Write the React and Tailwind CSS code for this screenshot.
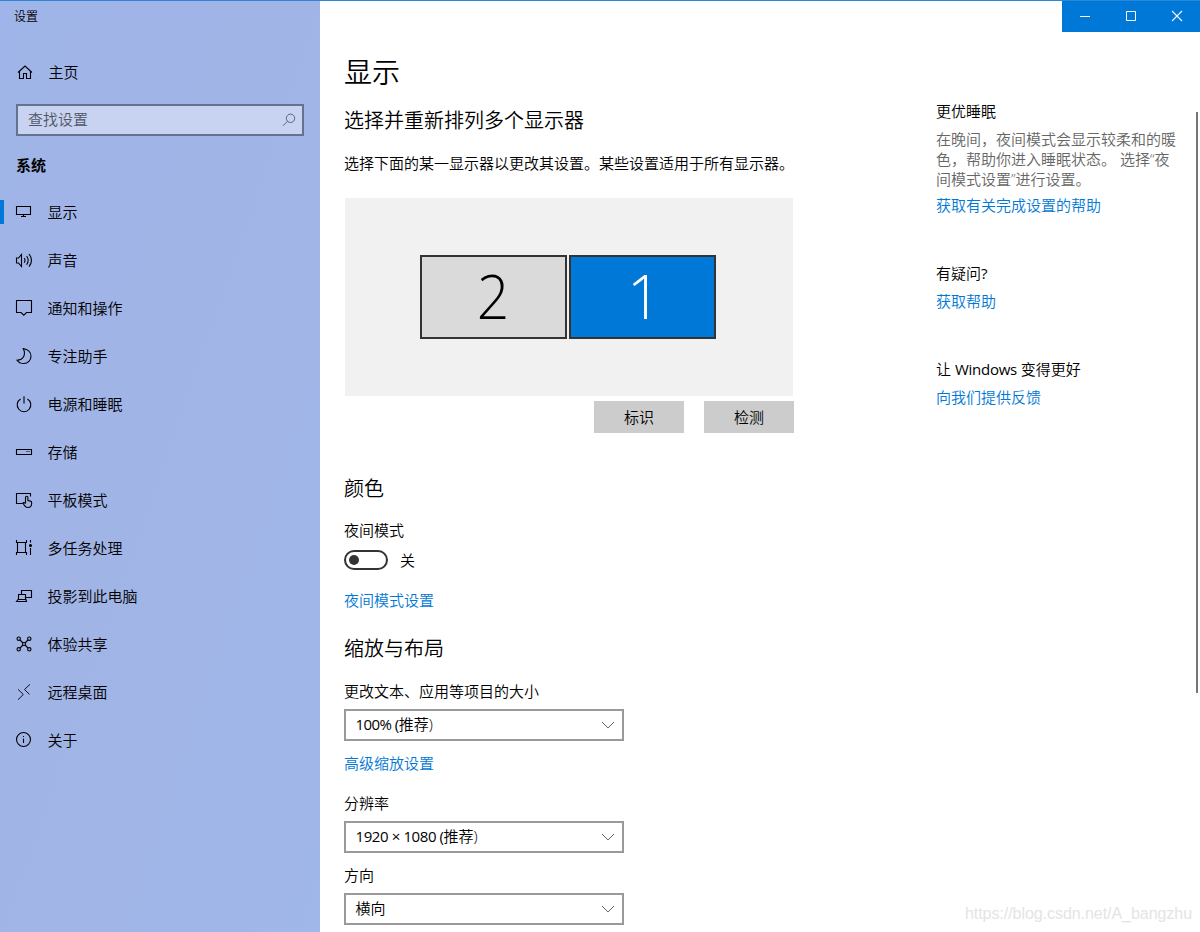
import React from 'react';

const Icon = ({ children }) => (
  <svg className="w-[18px] h-[18px] shrink-0" viewBox="0 0 18 18" fill="none" stroke="#000" strokeWidth="1.1">
    {children}
  </svg>
);

const navItems = [
  {
    label: '显示',
    active: true,
    icon: <path d="M1.5 3.5h14v8h-14zM8.5 12v1.5M6 13.5h5" />,
  },
  {
    label: '声音',
    icon: (
      <path d="M1.5 7h2l3-3.5v12L3.5 12h-2zM9.2 7q1.6 2.4 0 4.8M11.6 5q3.2 4.3 0 8.8M14 3q5 6.2 0 12.6" />
    ),
  },
  { label: '通知和操作', icon: <path d="M1.5 1.5h15v12h-5l-2.7 2.7-2.7-2.7H1.5z" /> },
  {
    label: '专注助手',
    icon: <path d="M8.2 1.6C13 2.2 16 5.4 16 9.2C16 13.3 12.8 16.5 8.8 16.5C6 16.5 3.5 15.3 2 13.2C8.5 13.2 11.2 7.5 8.2 1.6z" />,
  },
  { label: '电源和睡眠', icon: <path d="M5.6 4A6.8 6.8 0 1 0 12.4 4M9 1.2V8.5" /> },
  {
    label: '存储',
    icon: (
      <>
        <path d="M1.5 6.5h15v5h-15z" />
        <path d="M11.500 8.500h1M13.500 8.500h1" />
      </>
    ),
  },
  {
    label: '平板模式',
    icon: (
      <path d="M15.5 5.500V2.5h-14v10h6M10.5 12.500V6.500a1.200 1.200 0 0 1 2.400 0V9.500l2.600.6q1.200.4 1.200 1.800c0 3-1.400 4.600-3.700 4.600c-2.500 0-3.500-1.500-4.900-4.300q0-1.600 2.400.3" />
    ),
  },
  {
    label: '多任务处理',
    icon: (
      <>
        <path d="M1.5 1v2.5h10V1M2.5 3.5v10M10.5 3.5v10M1.5 16v-2.5h10V16M15.5 1v2.5M15.5 9v7" />
        <circle cx="15.5" cy="6.5" r="1" fill="#000" />
      </>
    ),
  },
  {
    label: '投影到此电脑',
    icon: <path d="M6.5 7V3.5h10v7h-6M3.5 12.5v-5h7v5M1.5 14.5l1.5-2h8l.5 2z" />,
  },
  {
    label: '体验共享',
    icon: (
      <>
        <circle cx="3.7" cy="3.7" r="1.7" />
        <circle cx="14.3" cy="3.7" r="1.7" />
        <circle cx="3.7" cy="14.3" r="1.7" />
        <circle cx="14.3" cy="14.3" r="1.7" />
        <circle cx="9" cy="9" r="1.5" />
        <path d="M5 5l3 3M13 5l-3 3M5 13l3-3M13 13l-3-3" />
      </>
    ),
  },
  { label: '远程桌面', icon: <path strokeWidth="0.9" d="M3 6.3l5.3 5.2L3 16.7M15 1.3L9.5 6.5l5 4.9" /> },
  {
    label: '关于',
    icon: (
      <>
        <circle cx="8.5" cy="8.5" r="7" />
        <path d="M8.5 5v1M8.5 7.5V12" />
      </>
    ),
  },
];

const Sidebar = () => (
  <aside className="w-[320px] shrink-0 flex flex-col bg-linear-to-br from-[#9fb4e8] via-[#a1b4e6] to-[#a0b7e9]">
    <div className="h-8 pl-[14px] pt-[2px] flex items-center text-xs">设置</div>
    <div className="mt-4 h-12 pl-[15px] flex items-center gap-[15.5px]">
      <Icon>
        <path d="M3 9.5l7-6.5 7 6.5M4.5 8.5v7h4v-5h3v5h4v-7" />
      </Icon>
      <span>主页</span>
    </div>
    <div className="mt-2 mx-4 h-8 pl-[10px] pr-[5px] flex items-center justify-between border-2 border-[#62728f] bg-[#c7d3f1] text-[#505664]">
      <span className="relative -top-px">查找设置</span>
      <svg className="w-[16px] h-[16px]" viewBox="0 0 16 16" fill="none" stroke="#5a6475">
        <circle cx="9.5" cy="6.3" r="4.2" />
        <path d="M6.5 9.3L2 13.8" />
      </svg>
    </div>
    <div className="mt-[19px] mb-[13px] h-5 pl-4 leading-5 font-bold">系统</div>
    <nav>
      {navItems.map((item) => (
        <div key={item.label} className="h-12 flex items-center">
          <div className={item.active ? 'w-1 h-6 bg-[#0078d7]' : 'w-1 h-6'} />
          <div className="pl-[11px] flex items-center gap-[14.5px]">
            <Icon>{item.icon}</Icon>
            <span>{item.label}</span>
          </div>
        </div>
      ))}
    </nav>
  </aside>
);

const WindowControls = () => (
  <div className="h-8 flex justify-end">
    <div className="w-[138px] h-8 grid grid-cols-3 bg-[#0078d7]">
      <svg className="w-[46px] h-8" viewBox="0 0 46 32" fill="none" stroke="#fff">
        <path d="M18 16.5h10" />
      </svg>
      <svg className="w-[46px] h-8" viewBox="0 0 46 32" fill="none" stroke="#fff">
        <path d="M18.5 11.5h9v9h-9z" />
      </svg>
      <svg className="w-[46px] h-8" viewBox="0 0 46 32" fill="none" stroke="#fff" strokeWidth="1.1">
        <path d="M18 11l10 10M28 11L18 21" />
      </svg>
    </div>
  </div>
);

const Heading = ({ className, children }) => (
  <h2 className={`h-7 leading-[30px] text-xl ${className}`}>{children}</h2>
);

const Link = ({ className = '', children }) => (
  <a className={`block h-5 leading-5 text-[#0078d7] ${className}`}>{children}</a>
);

const Select = ({ children }) => (
  <div className="mt-2 w-[280px] h-8 pl-[9.5px] pr-[7px] flex items-center justify-between border-2 border-[#999]">
    <span className="relative -top-px">{children}</span>
    <svg className="w-[14px] h-[8px]" viewBox="0 0 14 8" fill="none" stroke="#666">
      <path d="M1 1l6 6 6-6" />
    </svg>
  </div>
);

const DisplaySettings = () => (
  <main className="w-[592px] pl-6 pt-6">
    <h1 className="h-8 leading-8 text-[28px]">显示</h1>
    <Heading className="mt-[18px]">选择并重新排列多个显示器</Heading>
    <p className="mt-[19px] h-5 leading-5">选择下面的某一显示器以更改其设置。某些设置适用于所有显示器。</p>

    {/* Monitor arrangement */}
    <div className="mt-[25px] ml-px w-[448px] h-[198px] pl-[74.5px] pt-[57px] flex gap-[2px] bg-[#f1f1f1] font-light text-[60px]">
      <div className="w-[147.5px] h-[84px] pb-[2px] flex items-center justify-center border-2 border-[#333] bg-[#dadada]">
        <span className="scale-x-95">2</span>
      </div>
      <div className="w-[147px] h-[84px] pb-[2px] pl-[3px] flex items-center justify-center border-2 border-[#333] bg-[#0078d7] text-white">
        <span>1</span>
      </div>
    </div>
    <div className="mt-[5px] w-[450px] flex justify-end gap-5">
      <button className="w-[90px] h-8 bg-[#ccc]">标识</button>
      <button className="w-[90px] h-8 bg-[#ccc]">检测</button>
    </div>

    {/* Color */}
    <Heading className="mt-[41px]">颜色</Heading>
    <div className="mt-[18px] h-5 leading-5">夜间模式</div>
    <div className="mt-[10px] h-5 flex items-center gap-3">
      <div className="w-11 h-5 pl-[3px] flex items-center rounded-full border-2 border-[#333]">
        <div className="w-[10px] h-[10px] rounded-full bg-[#333]" />
      </div>
      <span>关</span>
    </div>
    <Link className="mt-5">夜间模式设置</Link>

    {/* Scale and layout */}
    <Heading className="mt-6">缩放与布局</Heading>
    <div className="mt-[19px] h-5 leading-5">更改文本、应用等项目的大小</div>
    <Select>
      <span className="font-normal tracking-[-0.55px]">100% (</span>推荐)
    </Select>
    <Link className="mt-3">高级缩放设置</Link>
    <div className="mt-5 h-5 leading-5">分辨率</div>
    <Select>
      <span className="font-normal tracking-[-0.4px]">1920 × 1080 (</span>推荐)
    </Select>
    <div className="mt-3 h-5 leading-5">方向</div>
    <Select>横向</Select>
  </main>
);

const HelpPanel = () => (
  <section className="pl-6 pt-[69px] w-[284px] leading-5 whitespace-nowrap">
    <h3>更优睡眠</h3>
    <p className="mt-2 text-[#666]">
      在晚间，夜间模式会显示较柔和的暖
      <br />
      色，帮助你进入睡眠状态。 选择“夜
      <br />
      间模式设置”进行设置。
    </p>
    <Link className="mt-[6px]">获取有关完成设置的帮助</Link>
    <h3 className="mt-12">
      有疑问<span className="font-normal">?</span>
    </h3>
    <Link className="mt-2">获取帮助</Link>
    <h3 className="mt-12">
      让 <span className="font-normal tracking-[-0.25px]">Windows</span> 变得更好
    </h3>
    <Link className="mt-2">向我们提供反馈</Link>
  </section>
);

const App = () => (
  <div className="relative w-[1200px] h-[932px] flex overflow-hidden bg-white text-black text-[15px] font-[350] font-['Open_Sans','Noto_Sans_CJK_SC',sans-serif]">
    <Sidebar />
    <div className="flex-1">
      <WindowControls />
      <div className="flex">
        <DisplaySettings />
        <HelpPanel />
        <div className="mt-20 w-[2px] h-[581px] bg-[#767676]" />
      </div>
    </div>
    <div className="absolute inset-x-0 top-0 h-px bg-[#2b88d8]" />
    <div className="absolute right-[8px] bottom-[6px] text-base leading-6 tracking-[-0.05px] text-[#e4e4e4] font-['Liberation_Sans',sans-serif]">
      https://blog.csdn.net/A_bangzhu
    </div>
  </div>
);

export default App;
